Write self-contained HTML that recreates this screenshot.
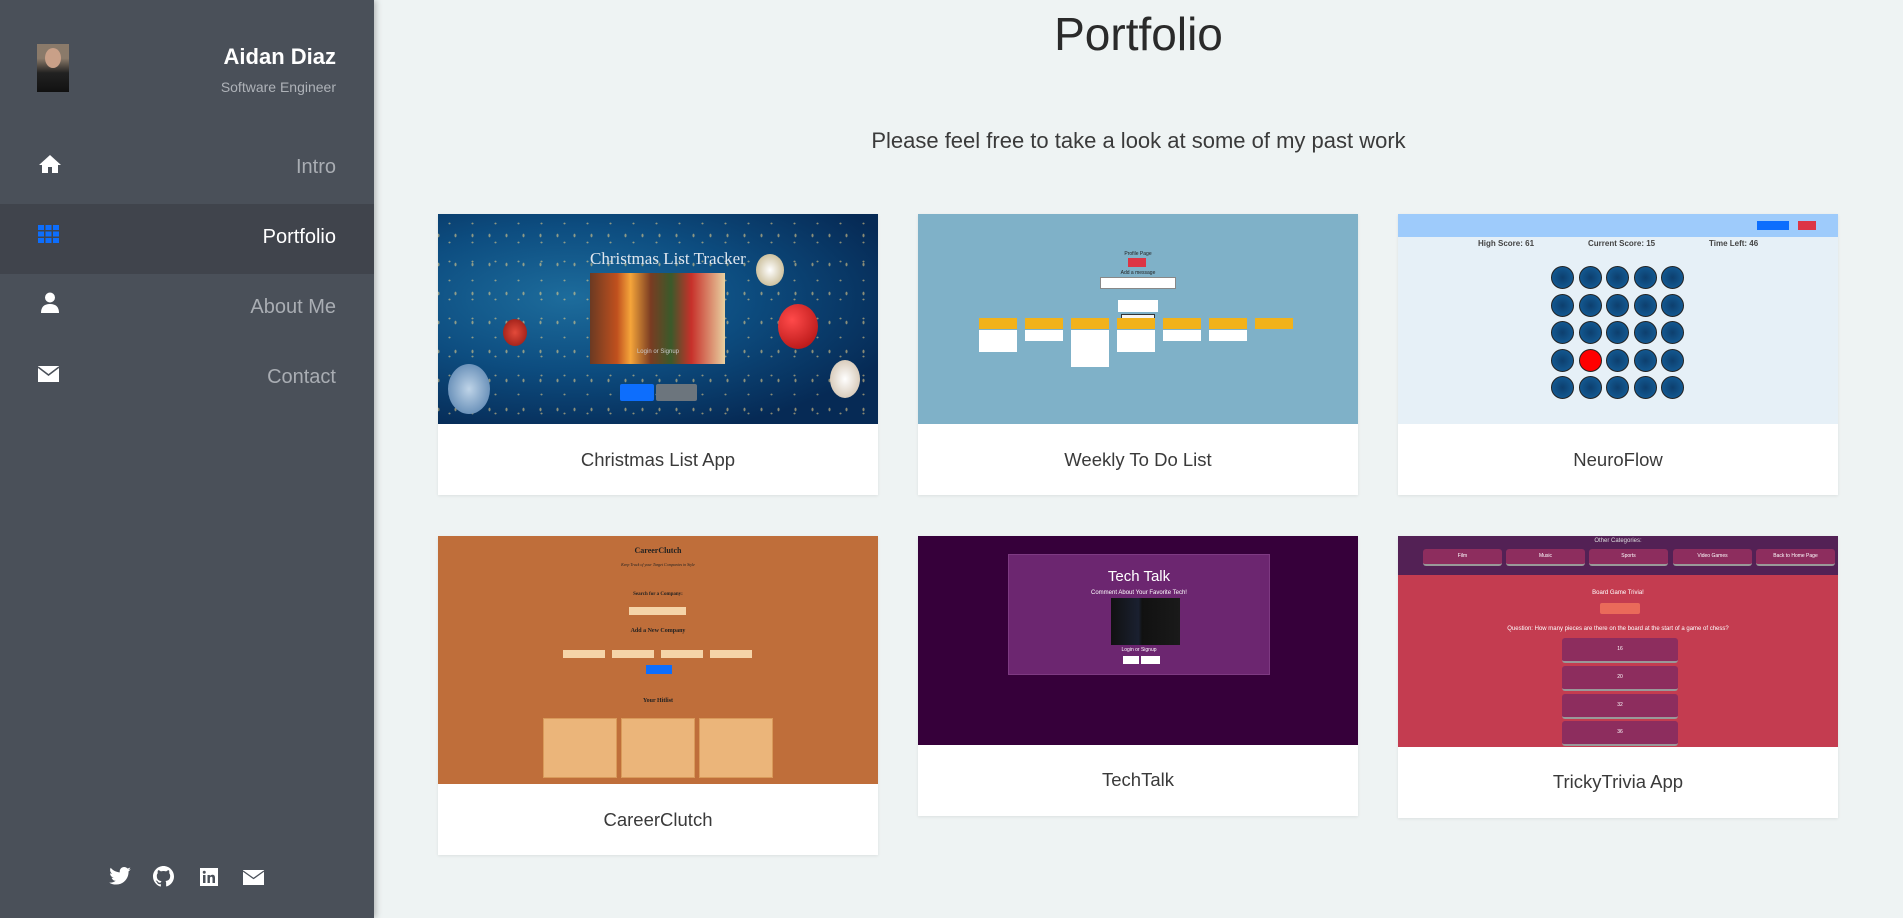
<!DOCTYPE html>
<html><head><meta charset="utf-8"><style>
*{box-sizing:border-box;margin:0;padding:0}
body{width:1903px;height:918px;overflow:hidden;background:#eef3f3;font-family:"Liberation Sans",sans-serif;position:relative}
.sb{position:absolute;left:0;top:0;width:374px;height:918px;background:#4a5059;box-shadow:2px 0 6px rgba(0,0,0,.25)}
.abs{position:absolute}
.nav{position:absolute;left:0;width:374px;height:70px}
.nav .t{position:absolute;right:38px;top:22px;font-size:20px;color:#a9adb3}
.nav svg{position:absolute;left:38px;top:20px}
.card{position:absolute;width:440px;background:#fff;box-shadow:0 1px 3px rgba(0,0,0,.08)}
.card .img{position:absolute;left:0;top:0;width:440px;overflow:hidden}
.cap{position:absolute;left:0;width:440px;text-align:center;font-size:18.5px;color:#3a3a3a}
.dot{position:absolute;width:23px;height:23px;border-radius:50%;background:radial-gradient(#0d3f6e,#15629e);border:1px solid #222}
.tb{position:absolute;height:17px;background:#8d2d5e;border-radius:3px;border-bottom:2px solid #999;color:#fff;font-size:5px;text-align:center;line-height:15px}
</style></head><body>
<div class="sb">
  <div class="abs" style="left:37px;top:44px;width:32px;height:48px;background:linear-gradient(#8a7a6a 0,#8a7a6a 30%,#222 60%,#111)"></div>
  <div class="abs" style="left:45px;top:48px;width:16px;height:20px;border-radius:50%;background:#c9a088"></div>
  <div class="abs" style="right:38px;top:44px;font-size:22px;font-weight:bold;color:#fff">Aidan Diaz</div>
  <div class="abs" style="right:38px;top:79px;font-size:14px;color:#aeb2b8">Software Engineer</div>
  <div class="nav" style="top:134px"><svg width="24" height="20" viewBox="0 0 24 20"><path d="M12 1L1 11h3v8h6v-6h4v6h6v-8h3L12 1z" fill="#fff"/></svg><span class="t">Intro</span></div>
  <div class="nav" style="top:204px;background:#40444c"><svg width="21" height="18" viewBox="0 0 21 18" style="top:21px"><g fill="#0d6efd"><rect x="0" y="0" width="6" height="5"/><rect x="7.5" y="0" width="6" height="5"/><rect x="15" y="0" width="6" height="5"/><rect x="0" y="6.5" width="6" height="5"/><rect x="7.5" y="6.5" width="6" height="5"/><rect x="15" y="6.5" width="6" height="5"/><rect x="0" y="13" width="6" height="5"/><rect x="7.5" y="13" width="6" height="5"/><rect x="15" y="13" width="6" height="5"/></g></svg><span class="t" style="color:#fff">Portfolio</span></div>
  <div class="nav" style="top:274px"><svg width="20" height="22" viewBox="0 0 20 22" style="top:18px;left:40px"><circle cx="10" cy="5.5" r="5" fill="#fff"/><path d="M1 21c0-6 3-9 9-9s9 3 9 9z" fill="#fff"/></svg><span class="t">About Me</span></div>
  <div class="nav" style="top:344px"><svg width="21" height="16" viewBox="0 0 21 16" style="top:22px"><rect x="0" y="0" width="21" height="16" fill="#fff"/><path d="M0 1l10.5 8L21 1" stroke="#4a5059" stroke-width="1.5" fill="none"/></svg><span class="t">Contact</span></div>
  <svg class="abs" style="left:109px;top:867px" width="22" height="18" viewBox="0 0 24 20"><path d="M24 2.4c-.9.4-1.8.7-2.8.8 1-.6 1.800-1.6 2.2-2.7-1 .6-2 1-3.1 1.2C19.3.7 18 0 16.6 0c-2.7 0-4.900 2.2-4.900 4.900 0 .4 0 .8.1 1.1C7.7 5.8 4.1 3.9 1.7.9c-.4.7-.7 1.6-.7 2.5 0 1.7.9 3.2 2.2 4.1-.8 0-1.6-.2-2.2-.6v.1c0 2.4 1.7 4.4 3.9 4.8-.4.1-.8.2-1.3.2-.3 0-.6 0-.9-.1.6 2 2.4 3.4 4.6 3.4-1.7 1.3-3.8 2.1-6.1 2.1-.4 0-.8 0-1.2-.1 2.2 1.4 4.8 2.2 7.5 2.2 9.1 0 14-7.5 14-14v-.6c1-.7 1.8-1.6 2.5-2.5z" fill="#fff"/></svg>
  <svg class="abs" style="left:153px;top:866px" width="21" height="21" viewBox="0 0 16 16"><path fill="#fff" d="M8 0C3.6 0 0 3.6 0 8c0 3.5 2.3 6.5 5.5 7.6.4.1.5-.2.5-.4v-1.4c-2.2.5-2.7-1-2.7-1-.4-.9-.9-1.2-.9-1.2-.7-.5.1-.5.1-.5.8.1 1.2.8 1.2.8.7 1.2 1.9.9 2.3.7.1-.5.3-.9.5-1.100-1.8-.2-3.6-.9-3.6-4 0-.9.3-1.6.8-2.1-.1-.2-.4-1 .1-2.1 0 0 .7-.2 2.2.8.6-.2 1.3-.3 2-.3s1.4.1 2 .3c1.500-1 2.2-.8 2.2-.8.4 1.1.2 1.9.1 2.1.5.6.8 1.3.8 2.1 0 3.1-1.9 3.7-3.6 3.9.3.3.5.8.5 1.5v2.2c0 .2.1.5.6.4C13.7 14.5 16 11.5 16 8c0-4.4-3.6-8-8-8z"/></svg>
  <svg class="abs" style="left:200px;top:868px" width="18" height="18" viewBox="0 0 18 18"><rect width="18" height="18" fill="#fff"/><rect x="3" y="7" width="2.5" height="8" fill="#4a5059"/><circle cx="4.25" cy="4.3" r="1.5" fill="#4a5059"/><path d="M7.5 7h2.4v1.1c.5-.8 1.3-1.3 2.5-1.3 2 0 2.6 1.2 2.6 3.2V15h-2.5v-4.5c0-1-.3-1.7-1.2-1.7-1 0-1.4.8-1.4 1.8V15H7.5z" fill="#4a5059"/></svg>
  <svg class="abs" style="left:243px;top:870px" width="21" height="15" viewBox="0 0 21 15"><rect width="21" height="15" fill="#fff"/><path d="M0 1l10.5 7.5L21 1" stroke="#4a5059" stroke-width="1.3" fill="none"/></svg>
</div>

<div class="abs" style="left:374px;width:1529px;top:7px;text-align:center;font-size:46px;color:#2a2a2a">Portfolio</div>
<div class="abs" style="left:374px;width:1529px;top:128px;text-align:center;font-size:22px;color:#3a3a3a">Please feel free to take a look at some of my past work</div>

<!-- Card 1 -->
<div class="card" style="left:438px;top:214px;height:281px">
  <div class="img" style="height:210px;background:radial-gradient(ellipse at 30% 40%,#1d6c9c 0,#0d4d80 40%,#062a55 80%)">
    <div class="abs" style="left:0;top:0;width:440px;height:210px;background-image:radial-gradient(#f5d68a 0.8px,transparent 1.3px),radial-gradient(#f5d68a 0.8px,transparent 1.3px);background-size:23px 19px,17px 29px;background-position:0 0,9px 7px;opacity:.55"></div>
    <div class="abs" style="left:152px;top:35px;font-family:'Liberation Serif',serif;font-size:17px;color:#dfe6ee">Christmas List Tracker</div>
    <div class="abs" style="left:152px;top:59px;width:135px;height:91px;background:linear-gradient(90deg,#6b3a22 0,#c0501e 20%,#f5a53a 30%,#7a3c22 45%,#3a5a2a 60%,#c7302a 75%,#e8d0a0);"></div>
    <div class="abs" style="left:182px;top:135px;width:76px;font-size:6px;color:#ccc;text-align:center">Login or Signup</div>
    <div class="abs" style="left:182px;top:170px;width:34px;height:17px;background:#0d6efd;border-radius:2px"></div>
    <div class="abs" style="left:218px;top:170px;width:41px;height:17px;background:#6c757d;border-radius:2px"></div>
    <div class="abs" style="left:65px;top:105px;width:24px;height:27px;border-radius:50%;background:radial-gradient(#e34a3a,#8d1510)"></div>
    <div class="abs" style="left:10px;top:150px;width:42px;height:50px;border-radius:50%;background:radial-gradient(#bfd4e8,#4a78a8)"></div>
    <div class="abs" style="left:340px;top:90px;width:40px;height:45px;border-radius:50%;background:radial-gradient(circle at 35% 35%,#ff4a4a,#a80c0c)"></div>
    <div class="abs" style="left:318px;top:40px;width:28px;height:32px;border-radius:50%;background:radial-gradient(#fff,#b9a878)"></div>
    <div class="abs" style="left:392px;top:146px;width:30px;height:38px;border-radius:50%;background:radial-gradient(#fff,#c9b7a0)"></div>
  </div>
  <div class="cap" style="top:235px">Christmas List App</div>
</div>

<!-- Card 2 -->
<div class="card" style="left:918px;top:214px;height:281px">
  <div class="img" style="height:210px;background:#7fb1c8">
    <div class="abs" style="left:182px;top:37px;width:76px;text-align:center;font-size:5px;color:#222">Profile Page</div>
    <div class="abs" style="left:210px;top:44px;width:18px;height:9px;background:#dc3545"></div>
    <div class="abs" style="left:182px;top:56px;width:76px;text-align:center;font-size:5px;color:#222">Add a message</div>
    <div class="abs" style="left:182px;top:63px;width:76px;height:12px;background:#fff;border:1px solid #888"></div>
    <div class="abs" style="left:200px;top:86px;width:40px;height:12px;background:#fff"></div>
    <div class="abs" style="left:203px;top:100px;width:34px;height:9px;background:#f5f5f5;border:1px solid #333"></div>
    <div class="abs" style="left:61px;top:104px;width:318px;height:11px;background:repeating-linear-gradient(90deg,#f2b21a 0,#f2b21a 38px,transparent 38px,transparent 46px)"></div>
    <div class="abs" style="left:61px;top:116px;width:38px;height:22px;background:#fff"></div>
    <div class="abs" style="left:107px;top:116px;width:38px;height:11px;background:#fff"></div>
    <div class="abs" style="left:153px;top:116px;width:38px;height:37px;background:#fff"></div>
    <div class="abs" style="left:199px;top:116px;width:38px;height:22px;background:#fff"></div>
    <div class="abs" style="left:245px;top:116px;width:38px;height:11px;background:#fff"></div>
    <div class="abs" style="left:291px;top:116px;width:38px;height:11px;background:#fff"></div>
  </div>
  <div class="cap" style="top:235px">Weekly To Do List</div>
</div>

<!-- Card 3 -->
<div class="card" style="left:1398px;top:214px;height:281px">
  <div class="img" style="height:210px;background:#e6f0f7">
    <div class="abs" style="left:0;top:0;width:440px;height:23px;background:#9ecbfb"></div>
    <div class="abs" style="left:359px;top:7px;width:32px;height:9px;background:#0d6efd"></div>
    <div class="abs" style="left:400px;top:7px;width:18px;height:9px;background:#dc3545"></div>
    <div class="abs" style="left:80px;top:25px;font-size:8px;font-weight:bold;color:#444">High Score: 61</div>
    <div class="abs" style="left:190px;top:25px;font-size:8px;font-weight:bold;color:#444">Current Score: 15</div>
    <div class="abs" style="left:311px;top:25px;font-size:8px;font-weight:bold;color:#444">Time Left: 46</div>
  </div>
  <div class="cap" style="top:235px">NeuroFlow</div>
</div>

<!-- Card 4 -->
<div class="card" style="left:438px;top:536px;height:319px">
  <div class="img" style="height:248px;background:#bf6e3a">
    <div class="abs" style="left:0;top:10px;width:440px;text-align:center;font-family:'Liberation Serif',serif;font-weight:bold;font-size:8px;color:#222">CareerClutch</div>
    <div class="abs" style="left:0;top:26px;width:440px;text-align:center;font-family:'Liberation Serif',serif;font-style:italic;font-size:4px;color:#222">Keep Track of your Target Companies in Style</div>
    <div class="abs" style="left:0;top:56px;width:440px;text-align:center;font-family:'Liberation Serif',serif;font-weight:bold;font-size:5px;color:#222">Search for a Company:</div>
    <div class="abs" style="left:191px;top:71px;width:57px;height:8px;background:#f5d4a8"></div>
    <div class="abs" style="left:0;top:92px;width:440px;text-align:center;font-family:'Liberation Serif',serif;font-weight:bold;font-size:6px;color:#222">Add a New Company</div>
    <div class="abs" style="left:125px;top:114px;width:42px;height:8px;background:#f5d4a8"></div>
    <div class="abs" style="left:174px;top:114px;width:42px;height:8px;background:#f5d4a8"></div>
    <div class="abs" style="left:223px;top:114px;width:42px;height:8px;background:#f5d4a8"></div>
    <div class="abs" style="left:272px;top:114px;width:42px;height:8px;background:#f5d4a8"></div>
    <div class="abs" style="left:208px;top:129px;width:26px;height:9px;background:#0d6efd"></div>
    <div class="abs" style="left:0;top:162px;width:440px;text-align:center;font-family:'Liberation Serif',serif;font-weight:bold;font-size:6px;color:#222">Your Hitlist</div>
    <div class="abs" style="left:105px;top:182px;width:74px;height:60px;background:#ebb57a;border:1px solid #d99a5a"></div>
    <div class="abs" style="left:183px;top:182px;width:74px;height:60px;background:#ebb57a;border:1px solid #d99a5a"></div>
    <div class="abs" style="left:261px;top:182px;width:74px;height:60px;background:#ebb57a;border:1px solid #d99a5a"></div>
  </div>
  <div class="cap" style="top:273px">CareerClutch</div>
</div>

<!-- Card 5 -->
<div class="card" style="left:918px;top:536px;height:280px">
  <div class="img" style="height:209px;background:#36003a">
    <div class="abs" style="left:90px;top:18px;width:262px;height:121px;background:#6c2670;border:1px solid #7e3a82"></div>
    <div class="abs" style="left:90px;top:32px;width:262px;text-align:center;font-size:15px;color:#fff">Tech Talk</div>
    <div class="abs" style="left:90px;top:54px;width:262px;text-align:center;font-size:6px;color:#fff">Comment About Your Favorite Tech!</div>
    <div class="abs" style="left:193px;top:62px;width:69px;height:47px;background:linear-gradient(90deg,#111 0,#1a2030 40%,#111 45%,#1a1a1a);"></div>
    <div class="abs" style="left:90px;top:111px;width:262px;text-align:center;font-size:5px;color:#fff">Login or Signup</div>
    <div class="abs" style="left:205px;top:120px;width:16px;height:8px;background:#fff"></div>
    <div class="abs" style="left:223px;top:120px;width:19px;height:8px;background:#fff"></div>
  </div>
  <div class="cap" style="top:233px">TechTalk</div>
</div>

<!-- Card 6 -->
<div class="card" style="left:1398px;top:536px;height:282px">
  <div class="img" style="height:211px;background:#c43c50">
    <div class="abs" style="left:0;top:0;width:440px;height:39px;background:#532155"></div>
    <div class="abs" style="left:0;top:2px;width:440px;text-align:center;font-size:6px;color:#ddd">Other Categories:</div>
    <div class="tb" style="left:25px;top:13px;width:79px">Film</div>
    <div class="tb" style="left:108px;top:13px;width:79px">Music</div>
    <div class="tb" style="left:191px;top:13px;width:79px">Sports</div>
    <div class="tb" style="left:275px;top:13px;width:79px">Video Games</div>
    <div class="tb" style="left:358px;top:13px;width:79px">Back to Home Page</div>
    <div class="abs" style="left:0;top:54px;width:440px;text-align:center;font-size:6px;color:#fff">Board Game Trivia!</div>
    <div class="abs" style="left:202px;top:67px;width:40px;height:11px;background:#ea6a5a;border-radius:2px"></div>
    <div class="abs" style="left:0;top:90px;width:440px;text-align:center;font-size:6px;color:#fff">Question: How many pieces are there on the board at the start of a game of chess?</div>
    <div class="tb" style="left:164px;top:102px;width:116px;height:25px;line-height:23px">16</div>
    <div class="tb" style="left:164px;top:130px;width:116px;height:25px;line-height:23px">20</div>
    <div class="tb" style="left:164px;top:158px;width:116px;height:25px;line-height:23px">32</div>
    <div class="tb" style="left:164px;top:185px;width:116px;height:25px;line-height:23px">36</div>
  </div>
  <div class="cap" style="top:235px">TrickyTrivia App</div>
</div>

<!-- NeuroFlow dots -->
<div class="abs" style="left:1551px;top:266px">
<div class="dot" style="left:0;top:0"></div><div class="dot" style="left:27.6px;top:0"></div><div class="dot" style="left:55.2px;top:0"></div><div class="dot" style="left:82.8px;top:0"></div><div class="dot" style="left:110.4px;top:0"></div>
<div class="dot" style="left:0;top:27.6px"></div><div class="dot" style="left:27.6px;top:27.6px"></div><div class="dot" style="left:55.2px;top:27.6px"></div><div class="dot" style="left:82.8px;top:27.6px"></div><div class="dot" style="left:110.4px;top:27.6px"></div>
<div class="dot" style="left:0;top:55.2px"></div><div class="dot" style="left:27.6px;top:55.2px"></div><div class="dot" style="left:55.2px;top:55.2px"></div><div class="dot" style="left:82.8px;top:55.2px"></div><div class="dot" style="left:110.4px;top:55.2px"></div>
<div class="dot" style="left:0;top:82.8px"></div><div class="dot" style="left:27.6px;top:82.8px;background:#f00"></div><div class="dot" style="left:55.2px;top:82.8px"></div><div class="dot" style="left:82.8px;top:82.8px"></div><div class="dot" style="left:110.4px;top:82.8px"></div>
<div class="dot" style="left:0;top:110.4px"></div><div class="dot" style="left:27.6px;top:110.4px"></div><div class="dot" style="left:55.2px;top:110.4px"></div><div class="dot" style="left:82.8px;top:110.4px"></div><div class="dot" style="left:110.4px;top:110.4px"></div>
</div>
</body></html>
